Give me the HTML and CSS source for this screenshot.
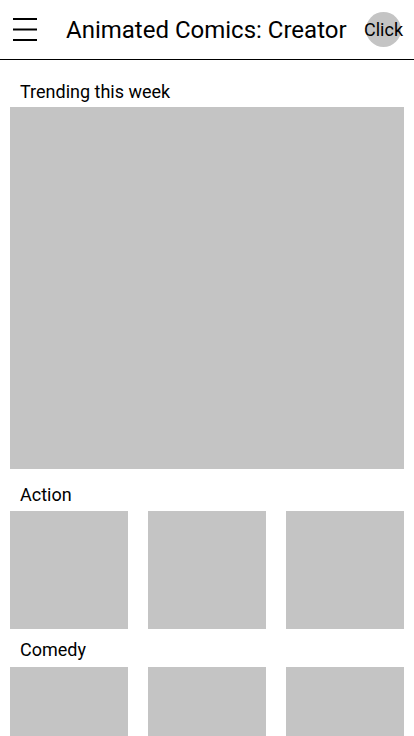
FILE: index.html
```html
<!DOCTYPE html>
<html lang="en">
<head>
    <meta charset="UTF-8">
    <meta name="viewport" content="width=device-width, initial-scale=1.0">
    <title>Animated Comics: Creator</title>
    <link rel="stylesheet" href="styles.css">
</head>
<body>
    <header class="ac-header">
        <button class="ac-menu" aria-label="Menu">
            <svg width="24" height="24" viewBox="0 0 24 24">
                <line x1="0" y1="1" x2="24" y2="1" stroke="#000" stroke-width="2"/>
                <line x1="0" y1="11.5" x2="24" y2="11.5" stroke="#000" stroke-width="2"/>
                <line x1="0" y1="22" x2="24" y2="22" stroke="#000" stroke-width="2"/>
            </svg>
        </button>
        <h1 class="ac-title">Animated Comics: Creator</h1>
        <div class="ac-avatar"><span>Click</span></div>
    </header>

    <main class="ac-main">
        <h2 class="ac-label ac-label-first">Trending this week</h2>
        <div class="ac-hero"></div>

        <h2 class="ac-label ac-label-action">Action</h2>
        <div class="ac-row">
            <div class="ac-thumb"></div>
            <div class="ac-thumb"></div>
            <div class="ac-thumb"></div>
        </div>

        <h2 class="ac-label ac-label-comedy">Comedy</h2>
        <div class="ac-row">
            <div class="ac-thumb"></div>
            <div class="ac-thumb"></div>
            <div class="ac-thumb"></div>
        </div>
    </main>
</body>
</html>
```

FILE: styles.css
```css
/* Base */
* {
    margin: 0;
    padding: 0;
    box-sizing: border-box;
}

body {
    font-family: Roboto, "Liberation Sans", Arial, sans-serif;
    color: #000;
    background: #fff;
    width: 414px;
    height: 736px;
    overflow: hidden;
}

/* Header */
.ac-header {
    height: 60px;
    display: flex;
    align-items: center;
    padding: 0 13px;
    border-bottom: 1px solid #000;
}

.ac-menu {
    width: 24px;
    height: 24px;
    border: none;
    background: none;
    display: flex;
    margin-top: 1px;
}

.ac-title {
    flex: 1;
    margin-left: 29px;
    font-size: 24px;
    font-weight: 400;
    line-height: 28px;
}

.ac-avatar {
    width: 35px;
    height: 35px;
    border-radius: 50%;
    background: #c4c4c4;
    display: flex;
    align-items: center;
    justify-content: center;
    overflow: visible;
}

.ac-avatar span {
    font-size: 18px;
    line-height: 20px;
    white-space: nowrap;
}

/* Content */
.ac-main {
    padding: 0 10px;
}

.ac-label {
    font-size: 18px;
    font-weight: 400;
    line-height: 20px;
    padding-left: 10px;
    margin-bottom: 5px;
}

.ac-label-first {
    margin-top: 22px;
}

.ac-label-action {
    margin-top: 16px;
    margin-bottom: 6px;
}

.ac-label-comedy {
    margin-top: 11px;
    margin-bottom: 7px;
}

.ac-hero {
    height: 362px;
    background: #c4c4c4;
}

.ac-row {
    display: grid;
    grid-template-columns: repeat(3, 118px);
    gap: 20px;
}

.ac-thumb {
    height: 118px;
    background: #c4c4c4;
}
```
